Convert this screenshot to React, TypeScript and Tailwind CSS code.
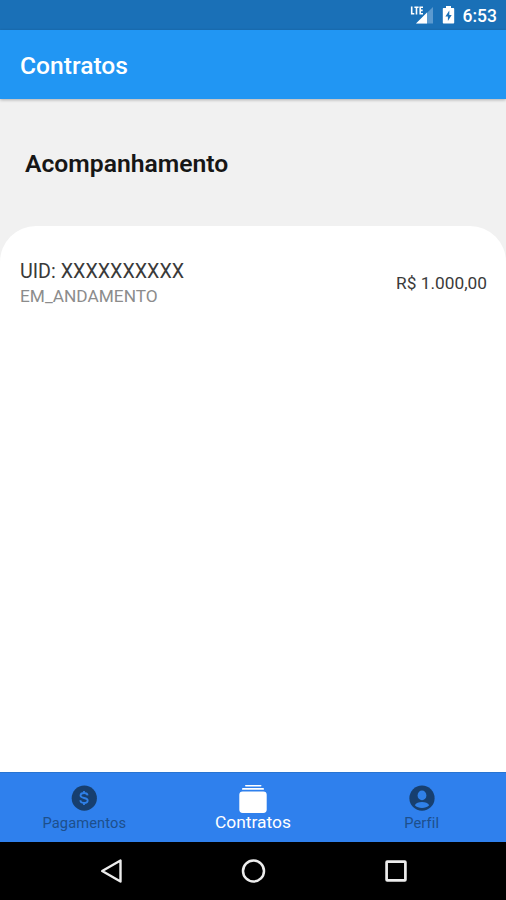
const TABS = [
  { label: "Pagamentos", icon: PaymentIcon, active: false },
  { label: "Contratos", icon: AlbumsIcon, active: true },
  { label: "Perfil", icon: ProfileIcon, active: false },
];

const CONTRACTS = [
  { uid: "XXXXXXXXXX", status: "EM_ANDAMENTO", value: "R$ 1.000,00" },
];

function PaymentIcon() {
  return (
    <svg width="26" height="26" viewBox="0 0 26 26">
      <circle cx="13.3" cy="13.2" r="12.6" fill="#173f6f" />
      <path
        d="M16.6 10.3C16.4 8.8 15 8 13.1 8 11 8 9.5 8.9 9.5 10.5c0 3.6 7.2 1.4 7.2 5 0 1.6-1.5 2.5-3.6 2.5-2.2 0-3.7-1-3.8-2.7M13 6v2M13 18v2"
        fill="none"
        stroke="#2f80e8"
        strokeWidth="1.8"
      />
    </svg>
  );
}

function AlbumsIcon() {
  return (
    <svg width="28" height="28" viewBox="0 0 28 28" fill="white">
      <rect x="6" y="0" width="16.5" height="1.6" rx=".8" />
      <rect x="3" y="3" width="22" height="1.8" rx=".9" />
      <rect x="0.3" y="6.4" width="27.4" height="21.5" rx="3.4" />
    </svg>
  );
}

function ProfileIcon() {
  return (
    <svg width="26" height="26" viewBox="0 0 26 26">
      <circle cx="13" cy="13.2" r="12.6" fill="#173f6f" />
      <ellipse cx="13" cy="10.4" rx="4.4" ry="4.9" fill="#2f80e8" />
      <path
        d="M5.8 20.2C7 17.7 9.7 16.9 13 16.9s6 .8 7.2 3.3C18.4 22 15.9 23 13 23s-5.4-1-7.2-2.8Z"
        fill="#2f80e8"
      />
    </svg>
  );
}

function StatusBar() {
  return (
    <div className="flex h-[30px] shrink-0 items-center justify-end bg-[#1a70b7] pr-[9px] text-white">
      <svg width="24" height="20" viewBox="0 0 24 20" className="mr-[8px]">
        <path d="M23 2v16.5H6Z" fill="#5c9acf" />
        <path d="M17 7.5v11H6Z" fill="white" />
        <path d="M0 0h13.6v10H0Z" fill="#1a70b7" />
        <path
          d="M1.7 1.5v7.2h2.6M4.4 2.2h4.2M6.5 2.2v7.2M13 2.2h-2.8v6.5H13M10.2 5.4h2.5"
          fill="none"
          stroke="white"
          strokeWidth="1.6"
        />
      </svg>
      <svg width="13" height="18" viewBox="0 0 13 18" className="mr-[8px]">
        <path
          d="M4 0h5v2h2.2c.6 0 1 .4 1 1v13.4c0 .6-.4 1-1 1H1.8c-.6 0-1-.4-1-1V3c0-.6.4-1 1-1H4Z"
          fill="white"
        />
        <path d="M7.3 4.5 3.4 10.4h2.5v4.5l3.8-6H7.3Z" fill="#1a70b7" />
      </svg>
      <span className="mt-[2px] text-[17.5px] leading-5 font-medium">6:53</span>
    </div>
  );
}

function ContractRow({ uid, status, value }: (typeof CONTRACTS)[number]) {
  return (
    <div className="flex items-center justify-between pr-[19px] pl-5">
      <div>
        <p className="text-[19.7px] leading-[27px] text-[#3a3a3a]">UID: {uid}</p>
        <p className="text-[17.3px] leading-[23px] text-[#8c8c8c]">{status}</p>
      </div>
      <span className="pt-px text-[17.3px] text-[#3a3a3a]">{value}</span>
    </div>
  );
}

function TabBar() {
  return (
    <nav className="grid h-[70px] shrink-0 grid-cols-3 border-t border-[#2874d2] bg-[#2f80ed]">
      {TABS.map(({ label, icon: Icon, active }) => (
        <div
          key={label}
          className={
            active
              ? "flex flex-col items-center pt-[12px] text-white"
              : "flex flex-col items-center pt-[12px] text-[#1d4f8c]"
          }
        >
          <Icon />
          <span
            className={
              active
                ? "-mt-px text-[17.4px] leading-5"
                : "mt-[2px] text-[14.7px] leading-5 tracking-[0.1px]"
            }
          >
            {label}
          </span>
        </div>
      ))}
    </nav>
  );
}

function NavigationBar() {
  return (
    <div className="flex h-[58px] shrink-0 items-center justify-between bg-black px-[99px]">
      <svg width="24" height="26" viewBox="0 0 24 26" fill="none" stroke="#ededed" strokeWidth="2.4">
        <path d="M3.2 13 21.5 2.5v21Z" strokeLinejoin="round" />
      </svg>
      <svg width="26" height="24" viewBox="0 0 26 24" fill="none" stroke="#ededed" strokeWidth="2.5">
        <circle cx="12.5" cy="12" r="10.5" />
      </svg>
      <svg width="22" height="22" viewBox="0 0 22 22" fill="none" stroke="#ededed" strokeWidth="2.7">
        <rect x="1.6" y="1.6" width="18.8" height="18.8" rx=".6" />
      </svg>
    </div>
  );
}

export default function App() {
  return (
    <div className="flex h-[900px] w-[506px] flex-col overflow-hidden bg-[#f1f1f1] font-['Roboto',sans-serif]">
      <StatusBar />
      <header className="z-10 flex h-[69px] shrink-0 items-center bg-[#2196f3] pt-[3px] pl-5 shadow-[0_1px_3px_rgba(0,0,0,0.28)]">
        <h1 className="text-[24.6px] font-medium text-white">Contratos</h1>
      </header>
      <div className="flex h-[127px] shrink-0 items-center pt-[2px] pl-[25px]">
        <h2 className="text-[24.7px] font-semibold text-[#161616]">Acompanhamento</h2>
      </div>
      <main className="flex-1 rounded-t-[36px] bg-white pt-[32px]">
        {CONTRACTS.map((contract) => (
          <ContractRow key={contract.uid} {...contract} />
        ))}
      </main>
      <TabBar />
      <NavigationBar />
    </div>
  );
}
